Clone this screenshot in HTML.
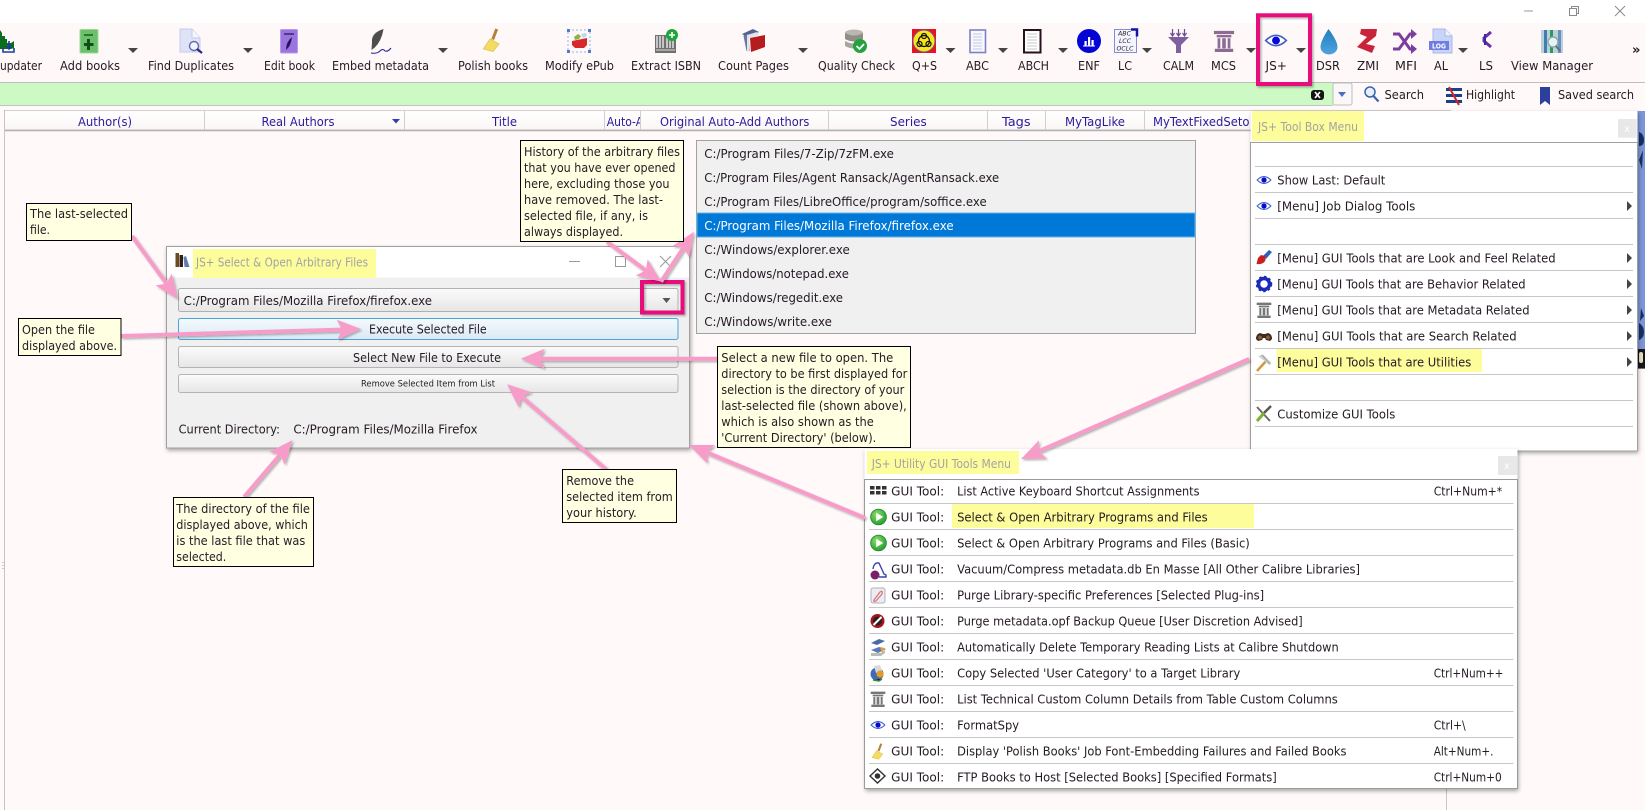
<!DOCTYPE html>
<html lang="en">
<head>
<meta charset="utf-8">
<title>JS+ Select &amp; Open Arbitrary Files</title>
<style>
html,body{margin:0;padding:0;background:#fff9f9;width:1645px;height:810px;overflow:hidden}
svg{display:block}
text{font-family:"DejaVu Sans","Liberation Sans",sans-serif;font-size:12px;fill:#241a24;white-space:pre}
.h text{fill:#2a1a9c}
.g{fill:#a3a3a3}
.w{fill:#fff}
</style>
</head>
<body>
<svg xmlns="http://www.w3.org/2000/svg" width="1645" height="810" viewBox="0 0 1645 810">
<defs>
<filter id="sh" x="-5%" y="-5%" width="110%" height="110%"><feDropShadow dx="1" dy="2" stdDeviation="2" flood-color="#000" flood-opacity=".35"/></filter>
<filter id="ash" x="-20%" y="-20%" width="140%" height="140%"><feDropShadow dx="1.5" dy="1.5" stdDeviation="1" flood-color="#000" flood-opacity=".3"/></filter>
<marker id="ah" viewBox="0 0 24 20" markerWidth="24" markerHeight="20" refX="18" refY="10" orient="auto" markerUnits="userSpaceOnUse"><path d="M24 10L0 0L5 10L0 20Z" fill="#f79cc9"/></marker>
<linearGradient id="hd" x1="0" y1="0" x2="0" y2="1"><stop offset="0" stop-color="#fff"/><stop offset="1" stop-color="#fbf6f6"/></linearGradient>
<linearGradient id="bt" x1="0" y1="0" x2="0" y2="1"><stop offset="0" stop-color="#fbfbfb"/><stop offset="1" stop-color="#e6e6e6"/></linearGradient>
<linearGradient id="bb" x1="0" y1="0" x2="0" y2="1"><stop offset="0" stop-color="#f4fafe"/><stop offset="1" stop-color="#dce9f3"/></linearGradient>
<radialGradient id="gr" cx=".4" cy=".35" r=".7"><stop offset="0" stop-color="#8fe06a"/><stop offset="1" stop-color="#1f9a2c"/></radialGradient>
<linearGradient id="dr" x1="0" y1="0" x2="0" y2="1"><stop offset="0" stop-color="#1f7fc0"/><stop offset="1" stop-color="#4fa3dd"/></linearGradient>
<clipPath id="cA"><rect x="605" y="110" width="35" height="20"/></clipPath>
<symbol id="eye" viewBox="0 0 24 16"><path d="M1 8Q12-3 23 8Q12 19 1 8Z" fill="#fff" stroke="#3d62c4" stroke-width="1.7"/><circle cx="12" cy="8" r="4.2" fill="#0808d8"/></symbol>
<symbol id="pil" viewBox="0 0 24 24"><path d="M1 1h22v3.5H1zM4 5.5h16v2.500H4zM5 9h3v11H5zM10 9h4v11h-4zM16 9h3v11h-3zM2 20.500h20V24H2z" fill="currentColor"/></symbol>
<symbol id="play" viewBox="0 0 18 18"><circle cx="9" cy="9" r="8.3" fill="url(#gr)" stroke="#2b8a35"/><path d="M6.500 4.500L14 9L6.500 13.500Z" fill="#fff"/></symbol>
<symbol id="brm" viewBox="0 0 20 26"><path d="M14.700 1L10.700 11.500" stroke="#b3823a" stroke-width="3"/><path d="M8 11L17 16L11 23.500L1.300 21Z" fill="#f4dc60" stroke="#d4b53c" stroke-width=".6"/></symbol>
<symbol id="tri" viewBox="0 0 10 5"><path d="M0 0H10L5 5Z" fill="#444"/></symbol>
</defs>

<!-- page -->
<rect width="1645" height="810" fill="#fff9f9"/>
<rect width="1645" height="23" fill="#fff"/>
<path d="M1524 11h9" stroke="#999"/>
<path d="M1569.500 8.500h7v7h-7zM1571.500 8.500v-2h7v7h-2" fill="none" stroke="#8a8a8a"/>
<path d="M1615 6l10 10M1625 6l-10 10" stroke="#8a8a8a"/>

<!-- toolbar -->
<rect y="23" width="1645" height="59.500" fill="#fff8f8"/>
<path d="M0 82.500H1645" stroke="#bdbdbd"/>
<rect y="83" width="1333" height="22" fill="#ccf9c4"/>
<path d="M0 105.500H1333" stroke="#c2c2c2"/>
<rect x="1333" y="83" width="19" height="22" rx="2" fill="#fbf7f7" stroke="#bdbdbd"/>
<path d="M1338 92h8l-4 5z" fill="#4a6fc0"/>
<rect x="1311" y="90" width="13" height="10" rx="3" fill="#141414"/><path d="M1315 92l5 6M1320 92l-5 6" stroke="#fff" stroke-width="1.600"/>
<circle cx="1370" cy="92" r="5" fill="#e6f0fb" stroke="#3b62b0" stroke-width="1.500"/><path d="M1373.500 96l5 5.500" stroke="#3b62b0" stroke-width="2.200"/>
<path d="M1446 88h16v3h-16zM1446 94h16v3h-16zM1446 100h16v3h-16z" fill="#1c3f8a"/><path d="M1449 87L1459 105" stroke="#d2232a" stroke-width="2"/>
<path d="M1540 87h10v18l-5-4-5 4z" fill="#2b3f9c"/>
<text x="1384.500" y="99" textLength="39.500" lengthAdjust="spacingAndGlyphs">Search</text>
<text x="1466" y="99" textLength="49" lengthAdjust="spacingAndGlyphs">Highlight</text>
<text x="1558" y="99" textLength="76" lengthAdjust="spacingAndGlyphs">Saved search</text>

<!-- toolbar labels -->
<g>
<text x="0" y="70" textLength="42" lengthAdjust="spacingAndGlyphs">updater</text>
<text x="60" y="70" textLength="60" lengthAdjust="spacingAndGlyphs">Add books</text>
<text x="148" y="70" textLength="86" lengthAdjust="spacingAndGlyphs">Find Duplicates</text>
<text x="264" y="70" textLength="51" lengthAdjust="spacingAndGlyphs">Edit book</text>
<text x="332" y="70" textLength="97" lengthAdjust="spacingAndGlyphs">Embed metadata</text>
<text x="458" y="70" textLength="70" lengthAdjust="spacingAndGlyphs">Polish books</text>
<text x="545" y="70" textLength="69" lengthAdjust="spacingAndGlyphs">Modify ePub</text>
<text x="631" y="70" textLength="70" lengthAdjust="spacingAndGlyphs">Extract ISBN</text>
<text x="718" y="70" textLength="71" lengthAdjust="spacingAndGlyphs">Count Pages</text>
<text x="818" y="70" textLength="77" lengthAdjust="spacingAndGlyphs">Quality Check</text>
<text x="912" y="70" textLength="25" lengthAdjust="spacingAndGlyphs">Q+S</text>
<text x="966" y="70" textLength="23" lengthAdjust="spacingAndGlyphs">ABC</text>
<text x="1018" y="70" textLength="31" lengthAdjust="spacingAndGlyphs">ABCH</text>
<text x="1078" y="70" textLength="22" lengthAdjust="spacingAndGlyphs">ENF</text>
<text x="1118" y="70" textLength="14" lengthAdjust="spacingAndGlyphs">LC</text>
<text x="1163" y="70" textLength="31" lengthAdjust="spacingAndGlyphs">CALM</text>
<text x="1211" y="70" textLength="25" lengthAdjust="spacingAndGlyphs">MCS</text>
<text x="1265.500" y="70" textLength="21.500" lengthAdjust="spacingAndGlyphs">JS+</text>
<text x="1316" y="70" textLength="24" lengthAdjust="spacingAndGlyphs">DSR</text>
<text x="1357" y="70" textLength="22" lengthAdjust="spacingAndGlyphs">ZMI</text>
<text x="1395" y="70" textLength="22" lengthAdjust="spacingAndGlyphs">MFI</text>
<text x="1434" y="70" textLength="14" lengthAdjust="spacingAndGlyphs">AL</text>
<text x="1479" y="70" textLength="14" lengthAdjust="spacingAndGlyphs">LS</text>
<text x="1511" y="70" textLength="82" lengthAdjust="spacingAndGlyphs">View Manager</text>
<text x="1632" y="54" style="font-weight:bold;font-size:13px" fill="#222">»</text>
</g>

<!-- toolbar dropdown triangles -->
<use href="#tri" x="128" y="48" width="10" height="5"/><use href="#tri" x="243" y="48" width="10" height="5"/><use href="#tri" x="438" y="48" width="10" height="5"/><use href="#tri" x="798" y="48" width="10" height="5"/><use href="#tri" x="945.500" y="48" width="10" height="5"/><use href="#tri" x="998" y="48" width="10" height="5"/><use href="#tri" x="1058" y="48" width="10" height="5"/><use href="#tri" x="1142" y="48" width="10" height="5"/><use href="#tri" x="1246" y="48" width="10" height="5"/><use href="#tri" x="1296" y="48" width="10" height="5"/><use href="#tri" x="1458" y="48" width="10" height="5"/>

<!-- toolbar icons -->
<path d="M0 30l2 3v3h3v3h2v4h4l3-2v7l-3 1H0z" fill="#0a6e1e"/><path d="M6 46l3 3 3-3M9 41v8M3 48v4h11v-4" stroke="#1c3f9a" stroke-width="1.600" fill="none"/>
<rect x="80" y="29.500" width="18" height="23.500" rx="1" fill="#6cc06c" stroke="#98d898"/><path d="M84 35h9" stroke="#125a12" stroke-width="1.400"/><path d="M88.500 39v11M84 44.500h9.500" stroke="#0d4f16" stroke-width="3"/>
<path d="M180 29h12l8 9v14h-20z" fill="#dfe3f8" stroke="#c6cbea"/><path d="M192 29v9h8" fill="#f4f5ff" stroke="#c6cbea"/><circle cx="194" cy="46" r="4.500" fill="#f2f5ff" stroke="#6a6aa8" stroke-width="1.400"/><path d="M197 49l5 4" stroke="#26268a" stroke-width="2.200"/>
<rect x="280.500" y="29.500" width="17" height="23.500" rx="1" fill="#9b74de" stroke="#b79bea"/><path d="M284 34h10" stroke="#2c1670" stroke-width="1.300"/><path d="M292 37q-6 5-6 13 5-4 6-13z" fill="#26135f"/>
<path d="M383.500 29Q371 33 372 42L371.500 50Q381 44 383.500 29Z" fill="#4d4d4d"/><path d="M371 53q6 1 9-2t5 0q3 1 6-3" fill="none" stroke="#2a2aa0" stroke-width="1.100"/>
<use href="#brm" x="482" y="28" width="20" height="26"/>
<rect x="568" y="30" width="22" height="22" fill="none" stroke="#8fb4e8" stroke-dasharray="2 2"/><path d="M567 29h3v3h-3zM588 29h3v3h-3zM567 50h3v3h-3zM588 50h3v3h-3z" fill="#4a7fd0"/><path d="M572 41l15-3v7l-3 3h-9l-3-3z" fill="#d9282c"/><path d="M574 37l4-3 3 2-2 3-4 1z" fill="#8cb34a"/><path d="M581 34l5-1 1 3-4 2z" fill="#bcd7ee"/>
<path d="M655 35h21v18h-21z" fill="#707070"/><path d="M657 36v12M660 36v12M663 36v12M667 36v12M670 36v12M673 36v12" stroke="#fff" stroke-width="1.200"/><path d="M656 50h19" stroke="#ddd"/><circle cx="672" cy="35" r="6" fill="#1da73a"/><path d="M672 32v6M669 35h6" stroke="#fff" stroke-width="1.600"/>
<path d="M742 34l11-5 6 3-11 6z" fill="#55648e"/><path d="M743.500 36l5-2 1 17-3 0z" fill="#68789f"/><path d="M747 35l10-3 2 3-10 3v14l-2-1z" fill="#e2e2ea"/><path d="M750 38l15-3v12l-14 5z" fill="#b51c20"/>
<ellipse cx="854" cy="33" rx="9" ry="3.500" fill="#b8b8b0"/><path d="M845 33v6q9 5 18 0v-6q-9 5-18 0z" fill="#8f8f88"/><path d="M845 41v5q9 5 18 0v-5q-9 5-18 0z" fill="#a6a69e"/><circle cx="860" cy="46" r="7" fill="#23a23f"/><path d="M856.500 46l3 3 4.500-5" fill="none" stroke="#fff" stroke-width="1.800"/>
<rect x="912" y="29" width="24" height="24" fill="#e8141c"/><circle cx="924" cy="41" r="11" fill="#f7e61e" stroke="#7a4fa0"/><circle cx="924" cy="41" r="5.500" fill="none" stroke="#111" stroke-width="1.200"/><circle cx="924" cy="36" r="2.500" fill="none" stroke="#111" stroke-width="1.200"/><circle cx="919.500" cy="44" r="2.500" fill="none" stroke="#111" stroke-width="1.200"/><circle cx="928.500" cy="44" r="2.500" fill="none" stroke="#111" stroke-width="1.200"/>
<rect x="970" y="30" width="15.500" height="22.500" fill="#f6f7ff" stroke="#8080c0" stroke-width="1.600"/><path d="M973 34h9M973 37h9M973 40h9M973 43h9M973 46h9M973 49h9" stroke="#c4c8dc"/>
<rect x="1024" y="30" width="16.500" height="22.500" fill="#fff" stroke="#28101f" stroke-width="2"/><path d="M1027 34h10M1027 37h10M1027 40h10M1027 43h10M1027 46h10M1027 49h10" stroke="#c8c8c8"/>
<circle cx="1089" cy="41" r="12" fill="#0404d4"/><path d="M1083 46h12" stroke="#fff"/><path d="M1084.500 41h2.200v4.500h-2.200zM1088 37h2.200v8.500H1088zM1091.500 40h2.200v5.500h-2.200z" fill="#fff"/>
<rect x="1114.500" y="29.500" width="22" height="23" fill="#f4f6ff" stroke="#8a8ad0"/><path d="M1131 29.500h6v7" fill="none" stroke="#1414a8" stroke-width="2.500"/>
<text x="1118" y="35.500" textLength="13" lengthAdjust="spacingAndGlyphs" style="font-size:6px;font-style:italic">ABC</text><text x="1119" y="43" textLength="12" lengthAdjust="spacingAndGlyphs" style="font-size:6px;font-style:italic">LCC</text><text x="1116.500" y="50.500" textLength="17" lengthAdjust="spacingAndGlyphs" style="font-size:6px;font-style:italic">OCLC</text>
<path d="M1168 37h21l-8 8v8h-5v-8z" fill="#7f5fa0"/><path d="M1172.500 29v7M1178.500 29v7M1184.500 29v7M1170.500 33l2 3 2-3M1176.500 33l2 3 2-3M1182.500 33l2 3 2-3" stroke="#6b4f90" stroke-width="1.200" fill="none"/>
<use href="#pil" x="1213" y="29" width="22" height="24" style="color:#8c6c94"/>
<use href="#eye" x="1264" y="33" width="24" height="15"/>
<path d="M1328.500 29q-8 12-8 18a8 7 0 0 0 17 0q0-6-9-18z" fill="url(#dr)"/>
<path d="M1361 29H1377L1376 36L1366 44L1375 46L1372 53L1357 47L1367 37L1360 34Z" fill="#c8253a"/>
<path d="M1393 34h6l11 15h4M1393 49h6l11-15h4" fill="none" stroke="#7c3d9c" stroke-width="3"/><path d="M1411 29l6 5-6 5zM1411 44l6 5-6 5z" fill="#7c3d9c"/>
<path d="M1433 29h12l7 7v17h-19z" fill="#c8d5f8" stroke="#a7b8ea"/><path d="M1445 29v7h7" fill="#eef2ff" stroke="#a7b8ea"/><rect x="1429" y="41" width="20" height="9" fill="#6f7ce0"/><text x="1432" y="48.500" textLength="14" lengthAdjust="spacingAndGlyphs" class="w" style="font-size:7px;font-weight:bold">LOG</text>
<path d="M1491 32l-7 6v3l7 6" fill="none" stroke="#6b2fa8" stroke-width="3"/><path d="M1484 34h2v11h-2z" fill="#3a2b9a"/>
<rect x="1541" y="30" width="22" height="23" fill="#bcd0dc"/><path d="M1544 30h3v23h-3z" fill="#3f7fb0"/><path d="M1550 30h3v23h-3z" fill="#2e9a5a"/><path d="M1558 30h3v23h-3z" fill="#6b8fc0"/><circle cx="1553" cy="42" r="5" fill="#e8f2f4" stroke="#8aa" stroke-width="1.400"/><path d="M1556 46l4 5" stroke="#577" stroke-width="2"/>

<!-- table header -->
<rect x="4.500" y="110.500" width="1446" height="19.500" fill="url(#hd)" stroke="#d4d0d0"/>
<path d="M4 130.500H1251" stroke="#b4b0b0" stroke-width="1.500"/>
<path d="M4.500 110V810" stroke="#c6c4c4"/>
<path d="M204.500 110v20M404.500 110v20M604.500 110v20M640.500 110v20M828.500 110v20M987.500 110v20M1045.500 110v20M1144.500 110v20" stroke="#d2cece"/>
<g class="h">
<text x="78" y="126" textLength="54" lengthAdjust="spacingAndGlyphs">Author(s)</text>
<text x="261.500" y="126" textLength="73" lengthAdjust="spacingAndGlyphs">Real Authors</text>
<text x="492" y="126" textLength="25" lengthAdjust="spacingAndGlyphs">Title</text>
<text x="606.700" y="126" textLength="50" lengthAdjust="spacingAndGlyphs" clip-path="url(#cA)">Auto-Add</text>
<text x="660" y="126" textLength="149.400" lengthAdjust="spacingAndGlyphs">Original Auto-Add Authors</text>
<text x="890" y="126" textLength="36.700" lengthAdjust="spacingAndGlyphs">Series</text>
<text x="1002" y="126" textLength="28.600" lengthAdjust="spacingAndGlyphs">Tags</text>
<text x="1065" y="126" textLength="60" lengthAdjust="spacingAndGlyphs">MyTagLike</text>
<text x="1153" y="126" textLength="96.500" lengthAdjust="spacingAndGlyphs">MyTextFixedSeto</text>
</g>
<path d="M392 119h8l-4 4.500z" fill="#2a3fb0"/>
<path d="M3 562v1M3 565v1M3 568v1" stroke="#999"/>

<!-- cover -->
<path d="M1446.500 110V810" stroke="#c8c6c6"/>
<rect x="1451.700" y="111" width="193.300" height="238" fill="#7b96d8"/>
<rect x="1451.700" y="349" width="193.300" height="19.600" fill="#16161c"/>
<path d="M1639 132q5 2 5 8t-5 6zM1643 150l-4 10 3 9zM1641 308l3 8-4 5zM1639 323q5 3 5 9t-5 8z" fill="#16305e"/>
<rect x="1639" y="352" width="4" height="11" rx="2" fill="#e8e0c0"/>

<!-- history list popup -->
<rect x="696.500" y="140.500" width="499" height="193" fill="#f0f0f0" stroke="#a2a2a2"/>
<rect x="697" y="213" width="498" height="24" fill="#0078d7" stroke="#66b5ea"/>
<g>
<text x="704.300" y="158" textLength="189.600" lengthAdjust="spacingAndGlyphs">C:/Program Files/7-Zip/7zFM.exe</text>
<text x="704.300" y="182" textLength="294.800" lengthAdjust="spacingAndGlyphs">C:/Program Files/Agent Ransack/AgentRansack.exe</text>
<text x="704.300" y="206" textLength="282.400" lengthAdjust="spacingAndGlyphs">C:/Program Files/LibreOffice/program/soffice.exe</text>
<text x="704.300" y="230" textLength="249.300" lengthAdjust="spacingAndGlyphs" class="w">C:/Program Files/Mozilla Firefox/firefox.exe</text>
<text x="704.300" y="254" textLength="145.500" lengthAdjust="spacingAndGlyphs">C:/Windows/explorer.exe</text>
<text x="704.300" y="278" textLength="144.600" lengthAdjust="spacingAndGlyphs">C:/Windows/notepad.exe</text>
<text x="704.300" y="302" textLength="138.700" lengthAdjust="spacingAndGlyphs">C:/Windows/regedit.exe</text>
<text x="704.300" y="326" textLength="127.600" lengthAdjust="spacingAndGlyphs">C:/Windows/write.exe</text>
</g>

<!-- dialog -->
<rect x="166.500" y="246.500" width="523" height="201.500" fill="#f0f0f0" stroke="#a0a0a0" filter="url(#sh)"/>
<rect x="167" y="247" width="522" height="30.500" fill="#fff"/>
<rect x="193" y="249" width="183" height="29" fill="#fdfd9c"/>
<path d="M175.500 253h3.500v14h-3.500z" fill="#6b4a20"/><path d="M179.500 255h3.500v12h-3.500z" fill="#2f2116"/><path d="M183.500 257l2.500-1 3.500 11h-5z" fill="#5f7fb0"/>
<text x="196" y="266.500" textLength="172" lengthAdjust="spacingAndGlyphs" class="g">JS+ Select &amp; Open Arbitrary Files</text>
<path d="M569 261.500h11" stroke="#999"/><rect x="615.500" y="256.500" width="10" height="10" fill="none" stroke="#999"/><path d="M660 256l11 11M671 256l-11 11" stroke="#999"/>
<rect x="178.500" y="288.500" width="499.500" height="23" rx="2" fill="url(#bt)" stroke="#b0b0b0"/>
<text x="183.600" y="305" textLength="248.400" lengthAdjust="spacingAndGlyphs">C:/Program Files/Mozilla Firefox/firefox.exe</text>
<path d="M662.500 298h8l-4 5z" fill="#555"/>
<rect x="178.500" y="318.500" width="499.500" height="21" rx="2" fill="url(#bb)" stroke="#4ba3dc"/>
<text x="369" y="333.500" textLength="117.700" lengthAdjust="spacingAndGlyphs">Execute Selected File</text>
<rect x="178.500" y="346.500" width="499.500" height="21" rx="2" fill="url(#bt)" stroke="#b4b4b4"/>
<text x="353" y="362" textLength="148" lengthAdjust="spacingAndGlyphs">Select New File to Execute</text>
<rect x="178.500" y="374.500" width="499.500" height="18" rx="2" fill="url(#bt)" stroke="#b4b4b4"/>
<text x="361" y="386.500" textLength="134" lengthAdjust="spacingAndGlyphs" style="font-size:9px">Remove Selected Item from List</text>
<text x="178.600" y="433.500" textLength="101.400" lengthAdjust="spacingAndGlyphs">Current Directory:</text>
<text x="293.400" y="433.500" textLength="184.100" lengthAdjust="spacingAndGlyphs">C:/Program Files/Mozilla Firefox</text>

<!-- JS+ tool box menu -->
<rect x="1250.500" y="111" width="387" height="340" fill="#fff" filter="url(#sh)"/>
<rect x="1252" y="111" width="112" height="30" fill="#fdfd9c"/>
<text x="1258" y="131" textLength="100" lengthAdjust="spacingAndGlyphs" class="g">JS+ Tool Box Menu</text>
<rect x="1618" y="119" width="18.700" height="18.700" fill="#e8e8e8"/><text x="1624" y="132" class="w" style="font-size:10px">x</text>
<path d="M1250.500 142.500H1637.500V451H1250.500Z" fill="none" stroke="#a0a0a0"/>
<path d="M1255 166.500H1633M1255 192.500H1633M1255 218.500H1633M1255 244.500H1633M1255 270.500H1633M1255 296.500H1633M1255 322.500H1633M1255 348.500H1633M1255 374.500H1633M1255 400.500H1633M1255 426.500H1633" stroke="#c6c6c6"/>
<rect x="1276.700" y="349" width="205.300" height="23" fill="#fdfd9c"/>
<text x="1277.300" y="184.500" textLength="108" lengthAdjust="spacingAndGlyphs">Show Last: Default</text>
<text x="1277.300" y="210.500" textLength="138" lengthAdjust="spacingAndGlyphs">[Menu] Job Dialog Tools</text>
<text x="1277.300" y="262.500" textLength="278.300" lengthAdjust="spacingAndGlyphs">[Menu] GUI Tools that are Look and Feel Related</text>
<text x="1277.300" y="288.500" textLength="248.300" lengthAdjust="spacingAndGlyphs">[Menu] GUI Tools that are Behavior Related</text>
<text x="1277.300" y="314.500" textLength="252.300" lengthAdjust="spacingAndGlyphs">[Menu] GUI Tools that are Metadata Related</text>
<text x="1277.300" y="340.500" textLength="239.300" lengthAdjust="spacingAndGlyphs">[Menu] GUI Tools that are Search Related</text>
<text x="1277.300" y="366.500" textLength="194" lengthAdjust="spacingAndGlyphs">[Menu] GUI Tools that are Utilities</text>
<text x="1277.300" y="418.500" textLength="118" lengthAdjust="spacingAndGlyphs">Customize GUI Tools</text>
<path d="M1627 201v10l5-5zM1627 253v10l5-5zM1627 279v10l5-5zM1627 305v10l5-5zM1627 331v10l5-5zM1627 357v10l5-5z" fill="#444"/>
<use href="#eye" x="1256" y="175" width="16" height="10"/><use href="#eye" x="1256" y="201" width="16" height="10"/>
<path d="M1272 252l-3-2-6 6 3 3z" fill="#2f5fc0"/><path d="M1265 256l-4-1-3 3-1.500 6q7 1 9-4z" fill="#c81e1e"/>
<circle cx="1264" cy="284" r="5.500" fill="none" stroke="#1c2ab8" stroke-width="3.500"/><circle cx="1264" cy="284" r="7.500" fill="none" stroke="#1c2ab8" stroke-width="1.500" stroke-dasharray="2.500 2.500"/>
<use href="#pil" x="1256" y="302" width="16" height="16" style="color:#777"/>
<path d="M1256 339q0-5 4-6l3 1 2 0 3-1q4 1 4 6l-2 2-4-1-1-2h-2l-1 2-4 1z" fill="#3a2a20"/><circle cx="1260" cy="337.500" r="2" fill="#8a5a30"/><circle cx="1268" cy="337.500" r="2" fill="#8a5a30"/>
<path d="M1257 371l10-11" stroke="#d09a3e" stroke-width="2.500"/><path d="M1258 356l5-1.500 8.500 8.500-2 2z" fill="#cfcfcf"/><path d="M1262 355l8 9" stroke="#a0a0a0"/>
<path d="M1257 407l13 14" stroke="#6b6b6b" stroke-width="2"/><path d="M1271 406l-7 7" stroke="#555" stroke-width="2.500"/><path d="M1264 413l-7 8" stroke="#7cb030" stroke-width="3"/>

<!-- Utility menu -->
<rect x="864.500" y="449" width="653" height="340" fill="#fff" filter="url(#sh)"/>
<rect x="867" y="451" width="152" height="23" fill="#fdfd9c"/>
<text x="871.700" y="468" textLength="139.300" lengthAdjust="spacingAndGlyphs" class="g">JS+ Utility GUI Tools Menu</text>
<rect x="1498" y="456" width="19" height="19" fill="#e8e8e8"/><text x="1504" y="469" class="w" style="font-size:10px">x</text>
<path d="M864.500 479.500H1517.500V788.500H864.500Z" fill="none" stroke="#9a9a9a"/>
<path d="M869 503.500H1513.500M869 529.500H1513.500M869 555.500H1513.500M869 581.500H1513.500M869 607.500H1513.500M869 633.500H1513.500M869 659.500H1513.500M869 685.500H1513.500M869 711.500H1513.500M869 737.500H1513.500M869 763.500H1513.500" stroke="#c6c6c6"/>
<rect x="952" y="504" width="302" height="24" fill="#fdfd9c"/>
<g>
<text x="891.200" y="495.500" textLength="53" lengthAdjust="spacingAndGlyphs">GUI Tool:</text>
<text x="891.200" y="521.500" textLength="53" lengthAdjust="spacingAndGlyphs">GUI Tool:</text>
<text x="891.200" y="547.500" textLength="53" lengthAdjust="spacingAndGlyphs">GUI Tool:</text>
<text x="891.200" y="573.500" textLength="53" lengthAdjust="spacingAndGlyphs">GUI Tool:</text>
<text x="891.200" y="599.500" textLength="53" lengthAdjust="spacingAndGlyphs">GUI Tool:</text>
<text x="891.200" y="625.500" textLength="53" lengthAdjust="spacingAndGlyphs">GUI Tool:</text>
<text x="891.200" y="651.500" textLength="53" lengthAdjust="spacingAndGlyphs">GUI Tool:</text>
<text x="891.200" y="677.500" textLength="53" lengthAdjust="spacingAndGlyphs">GUI Tool:</text>
<text x="891.200" y="703.500" textLength="53" lengthAdjust="spacingAndGlyphs">GUI Tool:</text>
<text x="891.200" y="729.500" textLength="53" lengthAdjust="spacingAndGlyphs">GUI Tool:</text>
<text x="891.200" y="755.500" textLength="53" lengthAdjust="spacingAndGlyphs">GUI Tool:</text>
<text x="891.200" y="781.500" textLength="53" lengthAdjust="spacingAndGlyphs">GUI Tool:</text>
<text x="957.100" y="495.500" textLength="242.400" lengthAdjust="spacingAndGlyphs">List Active Keyboard Shortcut Assignments</text>
<text x="957.100" y="521.500" textLength="250.600" lengthAdjust="spacingAndGlyphs">Select &amp; Open Arbitrary Programs and Files</text>
<text x="957.100" y="547.500" textLength="292.700" lengthAdjust="spacingAndGlyphs">Select &amp; Open Arbitrary Programs and Files (Basic)</text>
<text x="957.100" y="573.500" textLength="402.900" lengthAdjust="spacingAndGlyphs">Vacuum/Compress metadata.db En Masse [All Other Calibre Libraries]</text>
<text x="957.100" y="599.500" textLength="307" lengthAdjust="spacingAndGlyphs">Purge Library-specific Preferences [Selected Plug-ins]</text>
<text x="957.100" y="625.500" textLength="345.600" lengthAdjust="spacingAndGlyphs">Purge metadata.opf Backup Queue [User Discretion Advised]</text>
<text x="957.100" y="651.500" textLength="381.600" lengthAdjust="spacingAndGlyphs">Automatically Delete Temporary Reading Lists at Calibre Shutdown</text>
<text x="957.100" y="677.500" textLength="283.200" lengthAdjust="spacingAndGlyphs">Copy Selected 'User Category' to a Target Library</text>
<text x="957.100" y="703.500" textLength="380.700" lengthAdjust="spacingAndGlyphs">List Technical Custom Column Details from Table Custom Columns</text>
<text x="957.100" y="729.500" textLength="62" lengthAdjust="spacingAndGlyphs">FormatSpy</text>
<text x="957.100" y="755.500" textLength="389.400" lengthAdjust="spacingAndGlyphs">Display 'Polish Books' Job Font-Embedding Failures and Failed Books</text>
<text x="957.100" y="781.500" textLength="319.600" lengthAdjust="spacingAndGlyphs">FTP Books to Host [Selected Books] [Specified Formats]</text>
<text x="1433.700" y="495.500" textLength="68.500" lengthAdjust="spacingAndGlyphs">Ctrl+Num+*</text>
<text x="1433.700" y="677.500" textLength="69.800" lengthAdjust="spacingAndGlyphs">Ctrl+Num++</text>
<text x="1433.700" y="729.500" textLength="32" lengthAdjust="spacingAndGlyphs">Ctrl+\</text>
<text x="1433.700" y="755.500" textLength="59.800" lengthAdjust="spacingAndGlyphs">Alt+Num+.</text>
<text x="1433.700" y="781.500" textLength="68" lengthAdjust="spacingAndGlyphs">Ctrl+Num+0</text>
</g>
<!-- utility icons -->
<path d="M870 486h4.500v3.500H870zM876 486h4.500v3.500H876zM882 486h4.500v3.500H882zM870 491h4.500v3.500H870zM876 491h4.500v3.500H876zM882 491h4.500v3.500H882z" fill="#333"/>
<use href="#play" x="870" y="508.500" width="17" height="17"/><use href="#play" x="870" y="534.500" width="17" height="17"/>
<circle cx="875" cy="575" r="4.500" fill="#7a1f6a"/><path d="M873 569q1-7 6-6l5 11 2 1v2h-7" fill="none" stroke="#3a44b0" stroke-width="1.400"/>
<rect x="871" y="588" width="14" height="15" rx="2" fill="#ececf4" stroke="#b0b0c0"/><path d="M874 600l6-8q3-2 2 2l-6 7q-3 1-2-1z" fill="none" stroke="#d77a7a" stroke-width="1.300"/>
<circle cx="877.500" cy="621" r="7" fill="#a8141c"/><circle cx="877.500" cy="621" r="4.500" fill="#222"/><path d="M873.500 625l8-8" stroke="#fff" stroke-width="2"/>
<path d="M871 650l8-3 7 2-8 4z" fill="#5a7ab8"/><path d="M871 643l8-4 6 2-8 4z" fill="#4a6aa8"/><path d="M871 653h10l4-3v3l-4 3h-10z" fill="#bbb"/><path d="M880 647l5 1-3 5z" fill="#e8a030"/>
<circle cx="877" cy="674" r="6.500" fill="#3f6ab8"/><path d="M874 666l6-1 2 6-6 2z" fill="#d8d8d8"/><circle cx="880" cy="674" r="3.500" fill="#e89a20"/><path d="M873 680l6 1 3-2" stroke="#3a8a3a" stroke-width="1.500"/>
<use href="#pil" x="870" y="691" width="16" height="16" style="color:#777"/>
<use href="#eye" x="870" y="720" width="16" height="10"/>
<use href="#brm" x="871" y="743" width="14" height="18"/>
<path d="M870 776l7.500-7 7.500 7-7.500 7z" fill="none" stroke="#333" stroke-width="1.400"/><circle cx="877.500" cy="776" r="2.800" fill="#333"/>

<!-- pink highlight boxes -->
<g fill="none" stroke="#e8107c" stroke-width="4" filter="url(#ash)">
<rect x="1258" y="15.300" width="52" height="68.700"/>
<rect x="642" y="282" width="40.500" height="30.500"/>
</g>

<!-- arrows -->
<g stroke="#f79cc9" stroke-width="4" fill="none" filter="url(#ash)">
<path d="M132 236L174.200 294.100" marker-end="url(#ah)"/>
<path d="M121 336L355 329.200" marker-end="url(#ah)"/>
<path d="M607 241.700L656.200 278.100" marker-end="url(#ah)"/>
<path d="M661 281.700L690.700 236.700" marker-end="url(#ah)"/>
<path d="M717.600 358.700L526.700 358.700" marker-end="url(#ah)"/>
<path d="M606.500 469.700L511.600 388.200" marker-end="url(#ah)"/>
<path d="M244 497L288.700 444.600" marker-end="url(#ah)"/>
<path d="M865 518L694.500 447.300" marker-end="url(#ah)"/>
<path d="M1249 359L1026.500 456.600" marker-end="url(#ah)"/>
</g>

<!-- tooltips -->
<g fill="#ffffe1" stroke="#000">
<rect x="26.500" y="203.500" width="105" height="37"/>
<rect x="520.500" y="140.500" width="163" height="101"/>
<rect x="18.500" y="318.500" width="102.500" height="37"/>
<rect x="717.500" y="346.500" width="193" height="101"/>
<rect x="173.500" y="497.500" width="140" height="69"/>
<rect x="562.500" y="469.500" width="114" height="53"/>
</g>
<g>
<text x="30" y="218" textLength="98" lengthAdjust="spacingAndGlyphs">The last-selected</text>
<text x="30" y="234" textLength="20" lengthAdjust="spacingAndGlyphs">file.</text>
<text x="524" y="156" textLength="156" lengthAdjust="spacingAndGlyphs">History of the arbitrary files</text>
<text x="524" y="172" textLength="151.500" lengthAdjust="spacingAndGlyphs">that you have ever opened</text>
<text x="524" y="188" textLength="145.500" lengthAdjust="spacingAndGlyphs">here, excluding those you</text>
<text x="524" y="204" textLength="139" lengthAdjust="spacingAndGlyphs">have removed. The last-</text>
<text x="524" y="220" textLength="124" lengthAdjust="spacingAndGlyphs">selected file, if any, is</text>
<text x="524" y="236" textLength="99" lengthAdjust="spacingAndGlyphs">always displayed.</text>
<text x="22" y="334" textLength="73" lengthAdjust="spacingAndGlyphs">Open the file</text>
<text x="22" y="350" textLength="95" lengthAdjust="spacingAndGlyphs">displayed above.</text>
<text x="721.300" y="362" textLength="172" lengthAdjust="spacingAndGlyphs">Select a new file to open. The</text>
<text x="721.300" y="378" textLength="186" lengthAdjust="spacingAndGlyphs">directory to be first displayed for</text>
<text x="721.300" y="394" textLength="183" lengthAdjust="spacingAndGlyphs">selection is the directory of your</text>
<text x="721.300" y="410" textLength="185.500" lengthAdjust="spacingAndGlyphs">last-selected file (shown above),</text>
<text x="721.300" y="426" textLength="152.500" lengthAdjust="spacingAndGlyphs">which is also shown as the</text>
<text x="721.300" y="442" textLength="155" lengthAdjust="spacingAndGlyphs">'Current Directory' (below).</text>
<text x="176.300" y="513" textLength="133.600" lengthAdjust="spacingAndGlyphs">The directory of the file</text>
<text x="176.300" y="529" textLength="131.600" lengthAdjust="spacingAndGlyphs">displayed above, which</text>
<text x="176.300" y="545" textLength="129" lengthAdjust="spacingAndGlyphs">is the last file that was</text>
<text x="176.300" y="561" textLength="50" lengthAdjust="spacingAndGlyphs">selected.</text>
<text x="566.300" y="485" textLength="67.700" lengthAdjust="spacingAndGlyphs">Remove the</text>
<text x="566.300" y="501" textLength="106.400" lengthAdjust="spacingAndGlyphs">selected item from</text>
<text x="566.300" y="517" textLength="70.400" lengthAdjust="spacingAndGlyphs">your history.</text>
</g>
</svg>
</body>
</html>
